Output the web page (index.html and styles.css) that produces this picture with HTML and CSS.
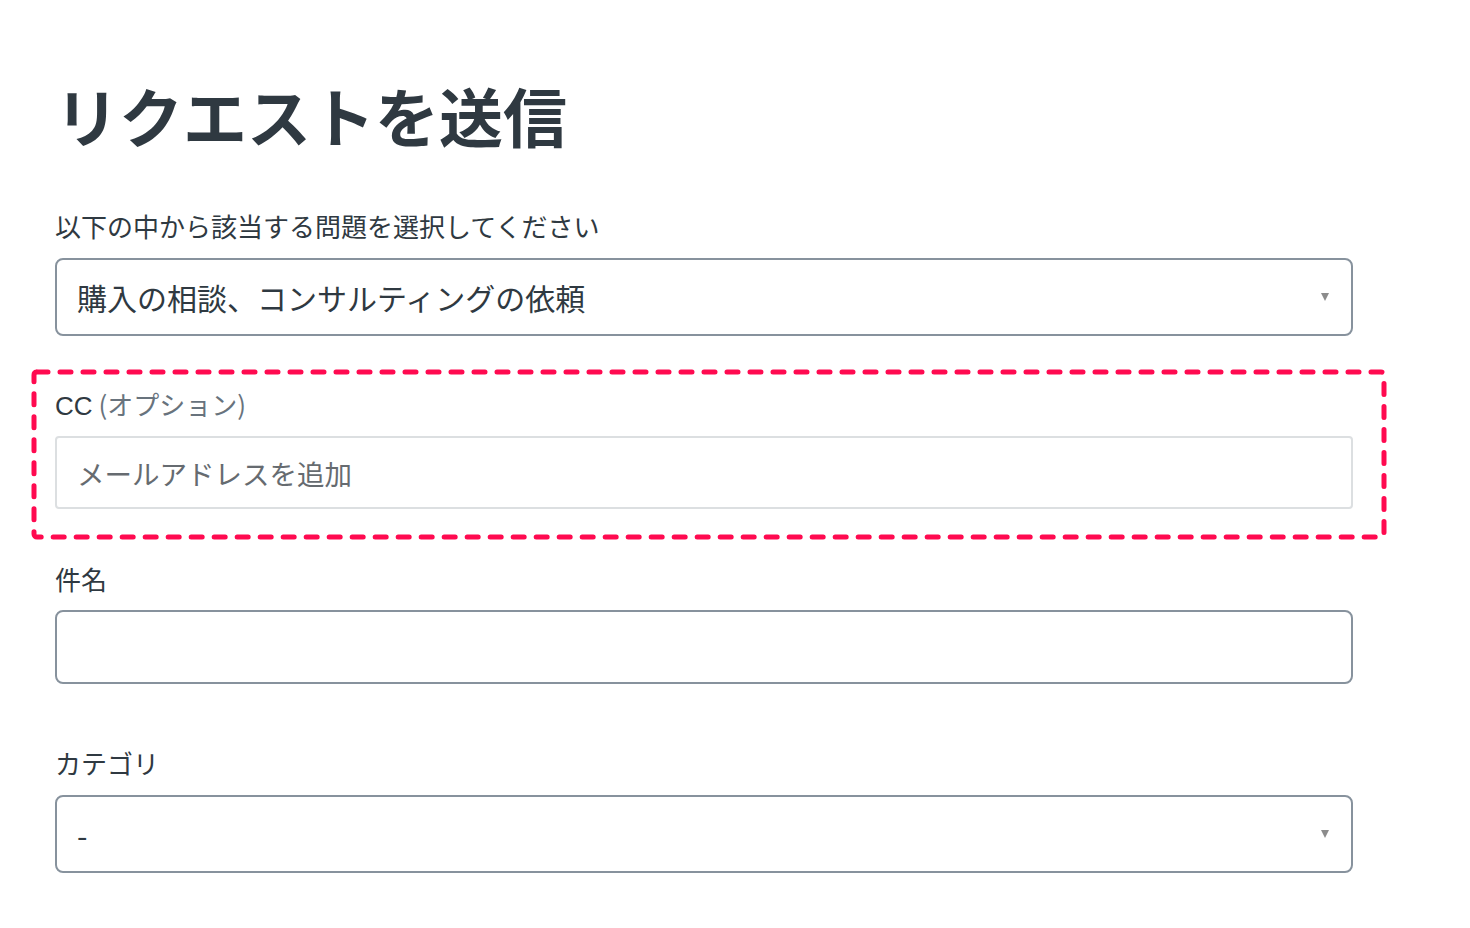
FILE: index.html
```html
<!DOCTYPE html>
<html lang="ja">
<head>
<meta charset="utf-8">
<title>リクエストを送信</title>
<link rel="stylesheet" href="styles.css">
</head>
<body>
<main class="page">
  <h1 class="title">リクエストを送信</h1>

  <div class="field field-first">
    <div class="label">以下の中から該当する問題を選択してください</div>
    <div class="select">
      <span class="select-value">購入の相談、コンサルティングの依頼</span>
      <span class="caret"></span>
    </div>
  </div>

  <div class="field field-cc">
    <div class="label"><span class="latin">CC</span> <span class="optional">(オプション)</span></div>
    <input class="input input-cc" type="text" placeholder="メールアドレスを追加">
    <svg class="highlight" width="1356" height="171" viewBox="0 0 1356 171" aria-hidden="true">
      <rect x="3" y="3" width="1350" height="165" rx="3" ry="3"></rect>
    </svg>
  </div>

  <div class="field field-subject">
    <div class="label">件名</div>
    <input class="input input-subject" type="text">
  </div>

  <div class="field field-category">
    <div class="label">カテゴリ</div>
    <div class="select">
      <span class="select-value">-</span>
      <span class="caret"></span>
    </div>
  </div>
</main>
</body>
</html>
```

FILE: styles.css
```css
html, body {
  margin: 0;
  padding: 0;
  background: #ffffff;
}

body {
  font-family: "Noto Sans CJK JP", "Liberation Sans", sans-serif;
  color: #2f3941;
}

.page {
  width: 1298px;
  padding: 74px 0 40px 55px;
}

.title {
  margin: 0 0 54px 0;
  font-size: 64px;
  line-height: 80px;
  font-weight: 700;
  color: #2f3941;
}

.field {
  position: relative;
}

.label {
  font-size: 26px;
  line-height: 36px;
  color: #2f3941;
  margin-bottom: 14px;
}

.latin {
  font-family: "Liberation Sans", "Noto Sans CJK JP", sans-serif;
}

.optional {
  color: #68737d;
}

.field-cc {
  margin-top: 50px;
}

.field-cc .label {
  margin-bottom: 12px;
}

.field-subject {
  margin-top: 52px;
}

.field-subject .label {
  margin-bottom: 13px;
}

.field-category {
  margin-top: 61px;
}

.field-category .label {
  margin-bottom: 14px;
}

.select {
  box-sizing: border-box;
  height: 78px;
  border: 2px solid #87929d;
  border-radius: 8px;
  display: flex;
  align-items: center;
  justify-content: space-between;
  padding: 0 22px 0 20px;
}

.select-value {
  font-size: 30px;
  color: #2f3941;
}

.caret {
  width: 0;
  height: 0;
  border-left: 4px solid transparent;
  border-right: 4px solid transparent;
  border-top: 8px solid #8c8c8c;
}

.input {
  display: block;
  box-sizing: border-box;
  width: 100%;
  margin: 0;
  font-family: "Noto Sans CJK JP", "Liberation Sans", sans-serif;
  background: #ffffff;
  outline: none;
}

.input-cc {
  height: 73px;
  border: 2px solid #dcdfe1;
  border-radius: 4px;
  padding: 0 20px;
  font-size: 27.5px;
  color: #2f3941;
}

.input-cc::placeholder {
  color: #666b70;
  opacity: 1;
}

.input-subject {
  height: 74px;
  border: 2px solid #87929d;
  border-radius: 8px;
  padding: 0 20px;
  font-size: 28px;
}

.highlight {
  position: absolute;
  top: -17px;
  left: -24px;
  pointer-events: none;
  overflow: visible;
}

.highlight rect {
  fill: none;
  stroke: #ff0a50;
  stroke-width: 5;
  stroke-dasharray: 11 12;
  stroke-linecap: round;
  stroke-linejoin: round;
}
```
